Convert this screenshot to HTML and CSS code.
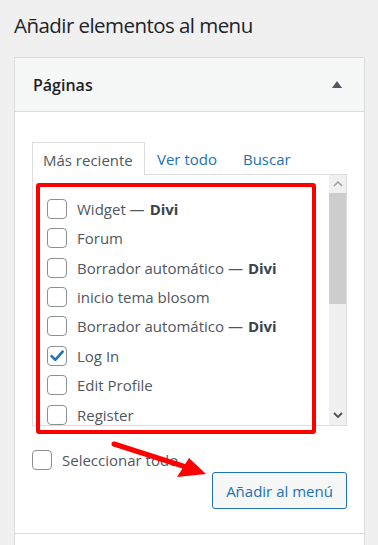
FILE: index.html
```html
<!DOCTYPE html>
<html lang="es">
<head>
<meta charset="utf-8">
<link rel="stylesheet" href="styles.css">
</head>
<body>
<h2 class="title">Añadir elementos al menu</h2>
<div class="panel">
  <div class="panel-head">
    <span class="panel-title">Páginas</span>
    <span class="toggle"></span>
  </div>
  <div class="panel-body">
    <div class="tabs">
      <span class="tab active">Más reciente</span>
      <span class="tab link">Ver todo</span>
      <span class="tab link">Buscar</span>
    </div>
    <div class="listbox">
      <ul class="items">
        <li><span class="cb"></span>Widget — <b>Divi</b></li>
        <li><span class="cb"></span>Forum</li>
        <li><span class="cb"></span>Borrador automático — <b>Divi</b></li>
        <li><span class="cb"></span>inicio tema blosom</li>
        <li><span class="cb"></span>Borrador automático — <b>Divi</b></li>
        <li><span class="cb checked"><svg viewBox="0 0 20 20" width="20" height="20"><path d="M4.6 10.2 L8.3 13.9 L15.6 5.6" fill="none" stroke="#2271b1" stroke-width="2.6" stroke-linecap="round" stroke-linejoin="round"/></svg></span>Log In</li>
        <li><span class="cb"></span>Edit Profile</li>
        <li><span class="cb"></span>Register</li>
      </ul>
      <div class="scrollbar">
        <span class="sb-arrow up"><svg viewBox="0 0 10 6" width="10" height="6"><path d="M1 5 L5 1 L9 5" fill="none" stroke="#a3a3a3" stroke-width="1.6"/></svg></span>
        <span class="sb-thumb"></span>
        <span class="sb-arrow down"><svg viewBox="0 0 10 6" width="10" height="6"><path d="M1 1 L5 5 L9 1" fill="none" stroke="#505050" stroke-width="1.8"/></svg></span>
      </div>
      <div class="highlight"></div>
    </div>
    <div class="footer">
      <label class="selall"><span class="cb"></span>Seleccionar todo</label>
      <div class="btn-row"><button class="btn">Añadir al menú</button></div>
    </div>
  </div>
  <div class="next-section"></div>
</div>
<svg class="arrow" width="378" height="545" viewBox="0 0 378 545">
  <line x1="114" y1="444" x2="186" y2="467" stroke="#ff0000" stroke-width="5" stroke-linecap="round"/>
  <polygon points="206,474 177,477 189,458" fill="#ff0000"/>
</svg>
</body>
</html>
```

FILE: styles.css
```css
* { box-sizing: border-box; }
html, body { margin: 0; padding: 0; }
body {
  background: #f0f0f1;
  font-family: "Open Sans", "Noto Sans", sans-serif;
  color: #3c434a;
  width: 378px;
  height: 545px;
  overflow: hidden;
  position: relative;
}
.title {
  margin: 0;
  padding: 11px 0 0 14px;
  font-size: 20.5px;
  letter-spacing: -0.55px;
  font-weight: 400;
  color: #1d2327;
  line-height: 29px;
  height: 57px;
}
.panel {
  margin-left: 14px;
  width: 351px;
  background: #fff;
  border: 1px solid #dcdcde;
  border-bottom: none;
}
.panel-head {
  height: 54px;
  background: #f6f7f7;
  border-bottom: 1px solid #dcdcde;
  display: flex;
  align-items: center;
  justify-content: space-between;
  padding: 0 22px 0 18px;
}
.panel-title {
  font-size: 16px;
  font-weight: 600;
  color: #1d2327;
}
.toggle {
  width: 0; height: 0;
  border-left: 5px solid transparent;
  border-right: 5px solid transparent;
  border-bottom: 7px solid #50575e;
  margin-top: -1px;
}
.panel-body {
  padding: 30px 0 0 17px;
  height: 421px;
}
.tabs {
  display: flex;
  height: 32px;
  align-items: stretch;
}
.tab {
  font-size: 15px;
  line-height: 34px;
  padding: 0 10px;
}
.tab.active {
  color: #50575e;
  background: #fff;
  border: 1px solid #dcdcde;
  border-bottom: none;
  width: 113px;
  padding-left: 10px;
  position: relative;
  z-index: 1;
  margin-bottom: -1px;
  height: 33px;
}
.tab.link { color: #2271b1; padding: 0 10px 0 12px; }
.tab.link + .tab.link { padding-left: 16px; }
.listbox {
  position: relative;
  width: 315px;
  height: 252px;
  border: 1px solid #dcdcde;
  display: flex;
}
.items {
  list-style: none;
  margin: 0;
  padding: 19px 0 0 14px;
  flex: 1;
  overflow: hidden;
  height: 250px;
}
.items li {
  height: 29.45px;
  display: flex;
  align-items: center;
  font-size: 15px;
  color: #50575e;
  white-space: nowrap;
}
.items b { font-weight: 700; color: #3c434a; margin-left: 5px; }
.cb {
  width: 20px;
  height: 20px;
  border: 1px solid #8c8f94;
  border-radius: 4px;
  background: #fff;
  margin-right: 10px;
  flex: none;
  display: inline-block;
}
.cb svg { display: block; margin: -1px; }
.scrollbar {
  width: 17px;
  background: #f0f0f0;
  display: flex;
  flex-direction: column;
  align-items: center;
}
.sb-arrow { height: 18px; display: flex; align-items: center; justify-content: center; }
.sb-thumb { width: 17px; height: 111px; background: #cdcdcd; }
.sb-arrow.down { margin-top: auto; height: 20px; }
.highlight {
  position: absolute;
  left: 3px;
  top: 8px;
  width: 280px;
  height: 251px;
  border: 4px solid #ff0000;
  border-radius: 3px;
  pointer-events: none;
}
.footer { padding-top: 24px; }
.selall {
  display: flex;
  align-items: center;
  font-size: 15px;
  color: #50575e;
  height: 20px;
}
.btn-row {
  display: flex;
  justify-content: flex-end;
  width: 315px;
  margin-top: 2px;
}
.btn {
  width: 135px;
  height: 37px;
  border: 1px solid #2271b1;
  border-radius: 3px;
  background: #f6f7f7;
  color: #2271b1;
  font-family: inherit;
  font-size: 15px;
  padding: 0;
}
.next-section {
  border-top: 1px solid #dcdcde;
  height: 20px;
}
.arrow { position: absolute; left: 0; top: 0; pointer-events: none; }
```
